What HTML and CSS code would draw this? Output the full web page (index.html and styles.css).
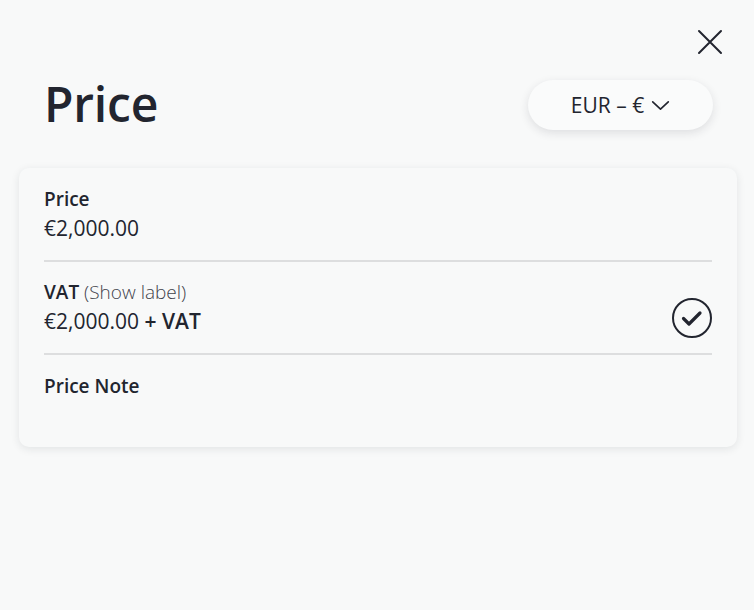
FILE: index.html
```html
<!DOCTYPE html>
<html>
<head>
<meta charset="utf-8">
<link rel="stylesheet" href="styles.css">
</head>
<body>
<div class="page">
  <div class="top-bar">
    <button class="close" aria-label="Close">
      <svg width="28" height="28" viewBox="0 0 28 28"><path d="M3 3 L25 25 M25 3 L3 25" stroke="#22252f" stroke-width="2" stroke-linecap="round" fill="none"/></svg>
    </button>
  </div>
  <div class="header">
    <h1 class="title">Price</h1>
    <button class="currency">EUR – €
      <svg class="chev" width="20" height="12" viewBox="0 0 20 12"><path d="M1.5 2 L10 10 L18.5 2" stroke="#22252f" stroke-width="1.8" fill="none" stroke-linecap="round" stroke-linejoin="round"/></svg>
    </button>
  </div>
  <div class="card">
    <div class="row">
      <div class="info">
        <div class="label">Price</div>
        <div class="value">€2,000.00</div>
      </div>
    </div>
    <div class="row">
      <div class="info">
        <div class="label">VAT <span class="hint">(Show label)</span></div>
        <div class="value">€2,000.00 <b>+ VAT</b></div>
      </div>
      <div class="check">
        <svg width="40" height="40" viewBox="0 0 40 40"><circle cx="20" cy="20" r="19" stroke="#22252f" stroke-width="2" fill="none"/><path d="M11.5 20.5 L17 26 L28 15" stroke="#22252f" stroke-width="3.2" fill="none" stroke-linecap="round" stroke-linejoin="round"/></svg>
      </div>
    </div>
    <div class="row last">
      <div class="info">
        <div class="label">Price Note</div>
        <div class="value empty"></div>
      </div>
    </div>
  </div>
</div>
</body>
</html>
```
FILE: styles.css
```css
html, body {
  margin: 0;
  padding: 0;
  background: #f8f9f9;
}
body {
  font-family: "Open Sans", "Noto Sans", sans-serif;
  color: #22252f;
  width: 754px;
  height: 610px;
  overflow: hidden;
}
.page {
  padding: 28px 17px 0 19px;
}
.top-bar {
  display: flex;
  justify-content: flex-end;
  padding-right: 13px;
}
.close {
  border: none;
  background: none;
  padding: 0;
  width: 28px;
  height: 28px;
  display: block;
  cursor: pointer;
}
.close svg { display: block; }
.header {
  display: flex;
  justify-content: space-between;
  align-items: center;
  padding: 0 24px 0 25px;
  margin-top: 18px;
  height: 60px;
}
.title {
  margin: 0;
  font-size: 48px;
  font-weight: 600;
  line-height: 60px;
  letter-spacing: -0.2px;
}
.currency {
  font-family: inherit;
  color: #22252f;
  border: none;
  background: #fafbfb;
  height: 50px;
  width: 185px;
  border-radius: 25px;
  box-shadow: 0 3px 10px rgba(30, 35, 50, 0.12);
  font-size: 21px;
  font-weight: 500;
  display: flex;
  align-items: center;
  justify-content: center;
  gap: 7px;
  padding: 0;
  margin-top: 2px;
}
.chev { display: block; margin-top: 1px; width: 19px; height: 11px; }
.card {
  margin-top: 34px;
  background: #f8f9f9;
  border-radius: 10px;
  box-shadow: 0 2px 8px rgba(30, 35, 50, 0.10);
  padding: 0 25px;
}
.row {
  display: flex;
  justify-content: space-between;
  align-items: flex-end;
  padding: 19px 0 18px;
  border-bottom: 2px solid #dddedf;
}
.row + .row { padding-top: 18px; }
.row.last { border-bottom: none; padding-top: 19px; }
.label {
  font-size: 19px;
  font-weight: 600;
  line-height: 24px;
}
.hint {
  font-weight: 300;
  color: #3f424b;
}
.value {
  font-size: 21px;
  line-height: 28px;
  margin-top: 3px;
}
.value b { font-weight: 600; }
.value.empty { height: 28px; }
.check {
  width: 40px;
  height: 40px;
  margin-bottom: -3px;
}
.check svg { display: block; }
```
